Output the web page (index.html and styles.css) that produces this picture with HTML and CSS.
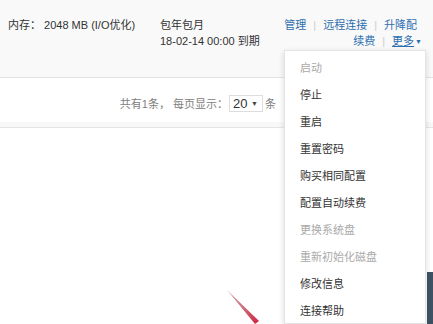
FILE: index.html
```html
<!DOCTYPE html>
<html lang="zh-CN">
<head>
    <meta charset="UTF-8">
    <title>实例列表</title>
    <link rel="stylesheet" href="styles.css">
</head>
<body>
    <div class="instance-row">
        <div class="col-spec">内存： 2048 MB (I/O优化)</div>
        <div class="col-pay">
            <div>包年包月</div>
            <div>18-02-14 00:00 到期</div>
        </div>
        <div class="col-ops">
            <div class="ops-line first">
                <a href="#">管理</a><span class="sep">|</span><a href="#">远程连接</a><span class="sep">|</span><a href="#">升降配</a>
            </div>
            <div class="ops-line">
                <a href="#">续费</a><span class="sep">|</span><a href="#" class="more">更多<span class="caret">▼</span></a>
            </div>
        </div>
    </div>

    <div class="pager">
        共有1条， 每页显示：<span class="page-size">20<span class="arrow">▼</span></span>条
    </div>

    <div class="content"></div>

    <ul class="menu">
        <li class="disabled">启动</li>
        <li>停止</li>
        <li>重启</li>
        <li>重置密码</li>
        <li>购买相同配置</li>
        <li>配置自动续费</li>
        <li class="disabled">更换系统盘</li>
        <li class="disabled">重新初始化磁盘</li>
        <li>修改信息</li>
        <li>连接帮助</li>
    </ul>

    <div class="side-panel"></div>

    <svg class="pointer" width="34" height="34" viewBox="0 0 34 34">
        <defs>
            <linearGradient id="arrowGrad" x1="0" y1="0" x2="1" y2="1">
                <stop offset="0" stop-color="#b0707a" stop-opacity="0.6"/>
                <stop offset="1" stop-color="#d0203a"/>
            </linearGradient>
        </defs>
        <polygon points="0,0 32,31 28,34" fill="url(#arrowGrad)"/>
    </svg>
</body>
</html>
```

FILE: styles.css
```css
html {
    overflow: hidden;
}
body {
    margin: 0;
    font-family: "Liberation Sans", "Noto Sans CJK SC", sans-serif;
    font-size: 11px;
    color: #333;
    background: #fff;
    width: 433px;
    height: 324px;
    overflow: hidden;
    position: relative;
}
a {
    color: #2d6fae;
    text-decoration: none;
}
.instance-row {
    display: flex;
    align-items: flex-start;
    height: 60px;
    padding: 17px 11px 0 8px;
    background: #f9f9f9;
    border-bottom: 1px solid #e3e3e3;
    line-height: 16px;
    white-space: nowrap;
}
.col-spec {
    width: 152px;
}
.col-ops {
    margin-left: auto;
    text-align: right;
}
.ops-line.first {
    padding-right: 5px;
}
.sep {
    color: #ccc;
    margin: 0 7px;
}
.more {
    text-decoration: underline;
}
.caret {
    font-size: 7px;
    margin-left: 1px;
    display: inline-block;
    vertical-align: 1px;
}
.pager {
    height: 49px;
    padding-top: 6px;
    box-sizing: border-box;
    display: flex;
    align-items: center;
    justify-content: flex-end;
    padding-right: 157px;
    color: #808080;
    border-bottom: 5px solid #f8f8f8;
    box-shadow: 0 1px 0 #e6e6e6;
}
.page-size {
    display: inline-flex;
    align-items: center;
    justify-content: space-between;
    width: 34px;
    height: 17px;
    padding: 0 4px 0 3px;
    margin: 0 2px 0 1px;
    border: 1px solid #ddd;
    box-sizing: border-box;
    color: #333;
    font-size: 13px;
}
.arrow {
    font-size: 7px;
    color: #444;
}
.menu {
    position: absolute;
    left: 284px;
    top: 50px;
    width: 142px;
    height: 274px;
    margin: 0;
    padding: 4px 0 0 0;
    list-style: none;
    background: #fff;
    border: 1px solid #e4e4e4;
    box-shadow: 0 2px 6px rgba(0, 0, 0, 0.15);
    box-sizing: border-box;
    overflow: hidden;
}
.menu li {
    height: 27px;
    line-height: 27px;
    padding-left: 15px;
    color: #333;
}
.menu li.disabled {
    color: #aaa;
}
.side-panel {
    position: absolute;
    left: 427px;
    top: 272px;
    width: 6px;
    height: 52px;
    background: #3d5163;
}
.pointer {
    position: absolute;
    left: 227px;
    top: 290px;
}
```
